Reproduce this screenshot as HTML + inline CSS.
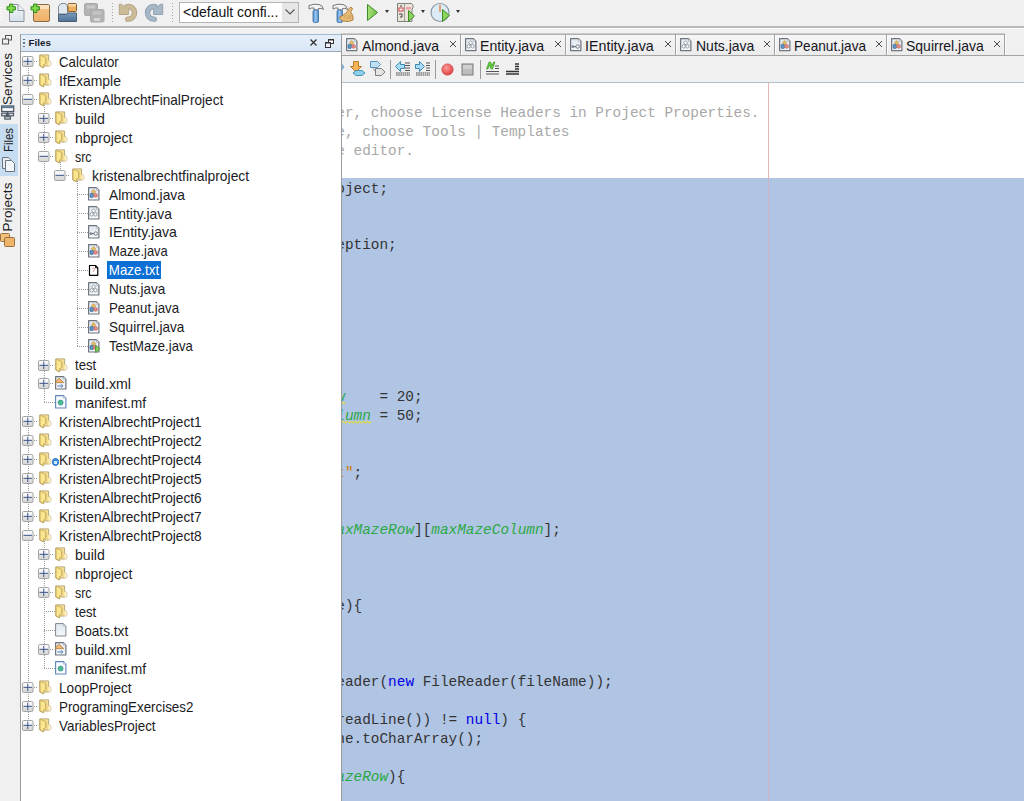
<!DOCTYPE html>
<html><head><meta charset="utf-8"><style>
*{box-sizing:border-box}
body{margin:0;width:1024px;height:801px;overflow:hidden;background:#f0f0f0;position:relative;font-family:"Liberation Sans",sans-serif}
.a{position:absolute}
.vl{position:absolute;width:1px;background:repeating-linear-gradient(to bottom,#9a9a9a 0 1px,transparent 1px 2px)}
.hl{position:absolute;height:1px;background:repeating-linear-gradient(to right,#9a9a9a 0 1px,transparent 1px 2px)}
.ex{position:absolute;width:12px;height:11px}
.ic{position:absolute;line-height:0}
.ic svg{display:block}
.tt{position:absolute;font-size:14.8px;line-height:19px;height:19px;color:#1b1b24;white-space:pre;transform:scaleX(0.93);transform-origin:0 0}
.sel{background:#0c6fd4;color:#fff;line-height:18px;height:18px;padding:0 2px;margin-left:-2px}
.cm{color:#a8a8a8} .kw{color:#0000e6} .fl{color:#2aa845;font-style:italic} .st{color:#ce7b00}
.code{position:absolute;font-family:"Liberation Mono",monospace;font-size:14.4px;line-height:19px;white-space:pre;color:#333}
.tab{position:absolute;top:34px;height:22px}
.tabt{position:absolute;font-size:13.5px;line-height:19px;color:#1b1b24;white-space:pre}
</style></head><body>
<!-- main toolbar -->
<div class="a" style="left:0;top:0;width:1024px;height:26px;background:#f0f0f0"></div>
<div class="a" style="left:0px;top:4px;width:2px;height:18px;background:repeating-linear-gradient(#fbfbfb 0 1px,transparent 1px 3px)"></div>
<div class="a" style="left:6px;top:3px;width:20px;height:20px;line-height:0"><svg width="20" height="20" viewBox="0 0 20 20"><defs><linearGradient id="nf" x1="0" y1="0" x2="0" y2="1"><stop offset="0" stop-color="#f4f7fb"/><stop offset="1" stop-color="#d6e0ea"/></linearGradient></defs><path d="M3.5 1.5h8.5l6 6v11h-14.5z" fill="url(#nf)" stroke="#8e949c"/><path d="M12 1.5v6h6" fill="#eef2f6" stroke="#8e949c"/><path d="M3.6 1.0999999999999996h3.2v2.6h2.6v3.2h-2.6v2.6h-3.2v-2.6h-2.6v-3.2h2.6z" fill="#7fdc4a" stroke="#2f8a1a" stroke-width="1"/></svg></div>
<div class="a" style="left:30px;top:3px;width:21px;height:20px;line-height:0"><svg width="21" height="20" viewBox="0 0 21 20"><defs><linearGradient id="np" x1="0" y1="0" x2="0" y2="1"><stop offset="0" stop-color="#f5c68a"/><stop offset="1" stop-color="#eeb068"/></linearGradient></defs><rect x="3.5" y="1.5" width="16" height="17" rx="1.5" fill="url(#np)" stroke="#8a6a45"/><rect x="4" y="2" width="15" height="4" fill="#fbe2bd"/><path d="M3.6 1.0999999999999996h3.2v2.6h2.6v3.2h-2.6v2.6h-3.2v-2.6h-2.6v-3.2h2.6z" fill="#7fdc4a" stroke="#2f8a1a" stroke-width="1"/></svg></div>
<div class="a" style="left:57px;top:2px;width:21px;height:21px;line-height:0"><svg width="21" height="21" viewBox="0 0 21 21"><defs><linearGradient id="op" x1="0" y1="0" x2="0" y2="1"><stop offset="0" stop-color="#7b9cc0"/><stop offset="1" stop-color="#4f6f93"/></linearGradient></defs><path d="M1.5 4.5l2.5-3h4.5l2 2.5v8h-9z" fill="#dfe7ef" stroke="#7e8a96"/><rect x="11" y="1.5" width="8.5" height="8" rx="1" fill="#eeb060" stroke="#8a6030"/><rect x="11.5" y="2" width="7.5" height="2.5" fill="#f8d8a8"/><path d="M1.5 12.5h8l1.5-1.5h8.5v8.5h-18z" fill="url(#op)" stroke="#4a5e74"/></svg></div>
<div class="a" style="left:84px;top:3px;width:21px;height:20px;line-height:0"><svg width="21" height="20" viewBox="0 0 21 20"><rect x="0.5" y="0.5" width="13" height="12" rx="1.5" fill="#b4b4b4" stroke="#a8a8a8"/><rect x="3" y="2.5" width="8" height="3" fill="#c8c8c8"/><rect x="6.5" y="6.5" width="13.5" height="12.5" rx="1.5" fill="#b4b4b4" stroke="#a8a8a8"/><rect x="9" y="8.5" width="8" height="3" fill="#c6c6c6"/><rect x="10" y="15" width="6" height="3" fill="#d6d6d6"/></svg></div>
<div class="a" style="left:112px;top:3px;width:1px;height:19px;background:repeating-linear-gradient(#a8a8a8 0 1px,transparent 1px 3px)"></div>
<div class="a" style="left:172px;top:3px;width:1px;height:19px;background:repeating-linear-gradient(#a8a8a8 0 1px,transparent 1px 3px)"></div>
<div class="a" style="left:118px;top:3px;width:20px;height:20px;line-height:0"><svg width="20" height="20" viewBox="0 0 20 20"><g stroke-linejoin="round"><path d="M9.2 3.6 A6.3 6.3 0 1 1 9.75 16.1" fill="none" stroke="#b0a080" stroke-width="5.4" stroke-linecap="round"/><path d="M1.3 1.2h1.9l3 2 4.2 2.8v5.5h-9.1z" fill="#cbbb99" stroke="#b0a080" stroke-width="0.9"/><path d="M9.2 3.6 A6.3 6.3 0 1 1 9.75 16.1" fill="none" stroke="#cbbb99" stroke-width="3.8" stroke-linecap="round"/><path d="M2 2h1l3 2 4 2.6v4.4h-8z" fill="#cbbb99"/></g></svg></div>
<div class="a" style="left:144px;top:3px;width:20px;height:20px;line-height:0"><svg width="20" height="20" viewBox="0 0 20 20"><g transform="translate(20,0) scale(-1,1)"><g stroke-linejoin="round"><path d="M9.2 3.6 A6.3 6.3 0 1 1 9.75 16.1" fill="none" stroke="#8c9eae" stroke-width="5.4" stroke-linecap="round"/><path d="M1.3 1.2h1.9l3 2 4.2 2.8v5.5h-9.1z" fill="#a6b7c6" stroke="#8c9eae" stroke-width="0.9"/><path d="M9.2 3.6 A6.3 6.3 0 1 1 9.75 16.1" fill="none" stroke="#a6b7c6" stroke-width="3.8" stroke-linecap="round"/><path d="M2 2h1l3 2 4 2.6v4.4h-8z" fill="#a6b7c6"/></g></g></svg></div>
<div class="a" style="left:179px;top:2px;width:120px;height:21px;border:1px solid #b4b4b4;background:#fff"></div>
<div class="a" style="left:282px;top:3px;width:16px;height:19px;background:#e6e6e6"></div>
<div class="a" style="left:284px;top:8px;width:12px;height:8px;line-height:0"><svg width="12" height="8" viewBox="0 0 12 8"><path d="M1.5 1.5l4.5 4.5 4.5-4.5" fill="none" stroke="#555" stroke-width="1.1"/></svg></div>
<div class="a" style="left:183px;top:3px;font-size:14px;line-height:19px;color:#111;white-space:pre">&lt;default confi...</div>
<div class="a" style="left:308px;top:3px;width:17px;height:20px;line-height:0"><svg width="17" height="20" viewBox="0 0 17 20"><defs><linearGradient id="hm" x1="0" y1="0" x2="1" y2="0"><stop offset="0" stop-color="#4f8ed0"/><stop offset="0.5" stop-color="#9cc8f0"/><stop offset="1" stop-color="#4a86c8"/></linearGradient></defs><path d="M1 2.5 Q6 0.5 11 1.5 Q15 2.5 15.5 6.5 Q13 4.5 10.5 5.5 V7 H6 V5 Q3.5 4.5 1 6z" fill="#f4f4f4" stroke="#6a6a6a" stroke-width="0.9"/><rect x="5" y="7" width="5.5" height="12.5" rx="1.5" fill="url(#hm)" stroke="#3a6a9a" stroke-width="0.8"/></svg></div>
<div class="a" style="left:332px;top:3px;width:17px;height:20px;line-height:0"><svg width="17" height="20" viewBox="0 0 17 20"><defs><linearGradient id="hm2" x1="0" y1="0" x2="1" y2="0"><stop offset="0" stop-color="#4f8ed0"/><stop offset="0.5" stop-color="#9cc8f0"/><stop offset="1" stop-color="#4a86c8"/></linearGradient></defs><path d="M1 2.5 Q6 0.5 11 1.5 Q15 2.5 15.5 6.5 Q13 4.5 10.5 5.5 V7 H6 V5 Q3.5 4.5 1 6z" fill="#f4f4f4" stroke="#6a6a6a" stroke-width="0.9"/><rect x="5" y="7" width="5.5" height="12.5" rx="1.5" fill="url(#hm2)" stroke="#3a6a9a" stroke-width="0.8"/></svg></div>
<div class="a" style="left:338px;top:6px;width:17px;height:17px;line-height:0"><svg width="17" height="17" viewBox="0 0 17 17"><path d="M12 1.5 Q14 0.5 14.5 3 L12.5 6 Q16 9 15 14 Q11 16.5 5 15 Q1.5 13.5 1.5 11 Q5 10 8.5 6.5z" fill="#e8bc78" stroke="#a87a3a" stroke-width="0.9"/><path d="M6 12l2-3M9 13l2-4M12 13l1-4" stroke="#c09050" stroke-width="0.8"/></svg></div>
<div class="a" style="left:366px;top:3px;width:13px;height:19px;line-height:0"><svg width="13" height="19" viewBox="0 0 13 19"><defs><linearGradient id="rg" x1="0" y1="0" x2="1" y2="0"><stop offset="0" stop-color="#a8e07a"/><stop offset="1" stop-color="#6cc046"/></linearGradient></defs><path d="M1.5 1.5l10 8-10 8z" fill="url(#rg)" stroke="#3d8a2a" stroke-linejoin="round"/></svg></div>
<div class="a" style="left:385px;top:10px;width:0;height:0;border-left:2.5px solid transparent;border-right:2.5px solid transparent;border-top:3px solid #333"></div>
<div class="a" style="left:396px;top:3px;width:21px;height:20px;line-height:0"><svg width="21" height="20" viewBox="0 0 21 20"><path d="M1.5 0.5h14l1.5 1.5v3l-1 1v12.5h-14.5z" fill="#e9e5d8" stroke="#808080"/><path d="M8.5 1v17" stroke="#a0a0a0"/><rect x="3" y="5" width="4" height="3" fill="#fff" stroke="#d04040"/><path d="M5 2v2M3 11h3v3H4" stroke="#444" fill="none"/><rect x="10" y="4" width="5" height="2.5" fill="#f3a0a8"/><path d="M12.5 7.5l6 5.5-6 5.5z" fill="#8cd65c" stroke="#3d8a2a" stroke-linejoin="round"/></svg></div>
<div class="a" style="left:421px;top:10px;width:0;height:0;border-left:2.5px solid transparent;border-right:2.5px solid transparent;border-top:3px solid #333"></div>
<div class="a" style="left:430px;top:2px;width:21px;height:21px;line-height:0"><svg width="21" height="21" viewBox="0 0 21 21"><circle cx="10" cy="10.5" r="9" fill="#dceaf6" stroke="#8a97a4" stroke-width="1.2"/><path d="M10 3v7" stroke="#e07a30" stroke-width="1.3"/><path d="M12.5 7.5l7 6-7 6z" fill="#8cd65c" stroke="#3d8a2a" stroke-linejoin="round"/></svg></div>
<div class="a" style="left:456px;top:10px;width:0;height:0;border-left:2.5px solid transparent;border-right:2.5px solid transparent;border-top:3px solid #333"></div>
<div class="a" style="left:0;top:26px;width:1024px;height:2px;background:#b9b9b9"></div>
<div class="a" style="left:0;top:28px;width:1024px;height:1px;background:#fbfbfb"></div>

<!-- editor -->
<div class="a" style="left:341px;top:55px;width:683px;height:1px;background:#a3a3a3"></div>
<div class="a" style="left:341px;top:33px;width:120px;height:1px;background:#cdcdcd"></div>
<div class="a" style="left:341px;top:34px;width:119px;height:21px;background:linear-gradient(#f6f6f6,#ebebeb);border-top:1px solid #b0b0b0"></div>
<div class="a" style="left:460px;top:33px;width:106px;height:1px;background:#cdcdcd"></div>
<div class="a" style="left:460px;top:34px;width:105px;height:21px;background:linear-gradient(#f6f6f6,#ebebeb);border-top:1px solid #b0b0b0"></div>
<div class="a" style="left:565px;top:33px;width:111px;height:1px;background:#cdcdcd"></div>
<div class="a" style="left:565px;top:34px;width:110px;height:21px;background:linear-gradient(#f6f6f6,#ebebeb);border-top:1px solid #b0b0b0"></div>
<div class="a" style="left:675px;top:33px;width:100px;height:1px;background:#cdcdcd"></div>
<div class="a" style="left:675px;top:34px;width:99px;height:21px;background:linear-gradient(#f6f6f6,#ebebeb);border-top:1px solid #b0b0b0"></div>
<div class="a" style="left:774px;top:33px;width:113px;height:1px;background:#cdcdcd"></div>
<div class="a" style="left:774px;top:34px;width:112px;height:21px;background:linear-gradient(#f6f6f6,#ebebeb);border-top:1px solid #b0b0b0"></div>
<div class="a" style="left:886px;top:33px;width:119px;height:1px;background:#cdcdcd"></div>
<div class="a" style="left:886px;top:34px;width:118px;height:21px;background:linear-gradient(#f6f6f6,#ebebeb);border-top:1px solid #b0b0b0"></div>
<div class="a" style="left:460px;top:34px;width:1px;height:21px;background:#a0a0a0"></div>
<div class="a" style="left:461px;top:35px;width:1px;height:20px;background:#fdfdfd"></div>
<div class="a" style="left:345.5px;top:38px;line-height:0"><svg width="12" height="14" viewBox="0 0 12 14"><defs><linearGradient id="dg2" x1="0" y1="0" x2="0" y2="1"><stop offset="0" stop-color="#dfe7f0"/><stop offset="1" stop-color="#f6f8fb"/></linearGradient></defs><path d="M0.6 0.6H8.4L10.9 3.1V12.6H0.6z" fill="url(#dg2)" stroke="#6f757d" stroke-width="1.2" stroke-linejoin="round"/><path d="M8.4 0.9V3.1H10.6" fill="#fff" stroke="#9aa0a8" stroke-width="0.7"/><path d="M5.6 2.6l2.2 2.2-2.2 2.2-2.2-2.2z" fill="#e9bd62" stroke="#b08a3a" stroke-width="0.6"/><rect x="2" y="6.3" width="3.4" height="4.3" rx="1.2" fill="#5d95c2" stroke="#2f5f8a" stroke-width="0.6"/><circle cx="7.6" cy="8.4" r="1.9" fill="#ec8c86" stroke="#b25a55" stroke-width="0.6"/></svg></div>
<div class="a" style="left:362px;top:36.5px;font-size:14.2px;line-height:19px;color:#16161e;white-space:pre;transform:scaleX(0.9860);transform-origin:0 0">Almond.java</div>
<div class="a" style="left:449px;top:40px;width:8px;height:8px;line-height:0"><svg width="8" height="8" viewBox="0 0 8 8"><path d="M1 1l6 6M7 1l-6 6" stroke="#4a4a4a" stroke-width="1"/></svg></div>
<div class="a" style="left:565px;top:34px;width:1px;height:21px;background:#a0a0a0"></div>
<div class="a" style="left:566px;top:35px;width:1px;height:20px;background:#fdfdfd"></div>
<div class="a" style="left:464.5px;top:38px;line-height:0"><svg width="12" height="14" viewBox="0 0 12 14"><defs><linearGradient id="dg2" x1="0" y1="0" x2="0" y2="1"><stop offset="0" stop-color="#dfe7f0"/><stop offset="1" stop-color="#f6f8fb"/></linearGradient></defs><path d="M0.6 0.6H8.4L10.9 3.1V12.6H0.6z" fill="url(#dg2)" stroke="#6f757d" stroke-width="1.2" stroke-linejoin="round"/><path d="M8.4 0.9V3.1H10.6" fill="#fff" stroke="#9aa0a8" stroke-width="0.7"/><path d="M5.6 2.8l2 2-2 2-2-2z" fill="#fff" stroke="#7d848c" stroke-width="0.8"/><circle cx="3.7" cy="8.3" r="1.7" fill="#fff" stroke="#7d848c" stroke-width="0.8"/><circle cx="7.5" cy="8.3" r="1.7" fill="#fff" stroke="#7d848c" stroke-width="0.8"/></svg></div>
<div class="a" style="left:480.2px;top:36.5px;font-size:14.2px;line-height:19px;color:#16161e;white-space:pre;transform:scaleX(0.9959);transform-origin:0 0">Entity.java</div>
<div class="a" style="left:554px;top:40px;width:8px;height:8px;line-height:0"><svg width="8" height="8" viewBox="0 0 8 8"><path d="M1 1l6 6M7 1l-6 6" stroke="#4a4a4a" stroke-width="1"/></svg></div>
<div class="a" style="left:675px;top:34px;width:1px;height:21px;background:#a0a0a0"></div>
<div class="a" style="left:676px;top:35px;width:1px;height:20px;background:#fdfdfd"></div>
<div class="a" style="left:569.5px;top:38px;line-height:0"><svg width="12" height="14" viewBox="0 0 12 14"><defs><linearGradient id="dg2" x1="0" y1="0" x2="0" y2="1"><stop offset="0" stop-color="#dfe7f0"/><stop offset="1" stop-color="#f6f8fb"/></linearGradient></defs><path d="M0.6 0.6H8.4L10.9 3.1V12.6H0.6z" fill="url(#dg2)" stroke="#6f757d" stroke-width="1.2" stroke-linejoin="round"/><path d="M8.4 0.9V3.1H10.6" fill="#fff" stroke="#9aa0a8" stroke-width="0.7"/><path d="M2 8.6h4" stroke="#666c74" stroke-width="1.2"/><circle cx="7.7" cy="8.6" r="1.7" fill="#fff" stroke="#666c74" stroke-width="0.9"/><rect x="1.6" y="7.4" width="2.2" height="2.4" fill="#7a8088"/></svg></div>
<div class="a" style="left:585.2px;top:36.5px;font-size:14.2px;line-height:19px;color:#16161e;white-space:pre;transform:scaleX(1.0057);transform-origin:0 0">IEntity.java</div>
<div class="a" style="left:664px;top:40px;width:8px;height:8px;line-height:0"><svg width="8" height="8" viewBox="0 0 8 8"><path d="M1 1l6 6M7 1l-6 6" stroke="#4a4a4a" stroke-width="1"/></svg></div>
<div class="a" style="left:774px;top:34px;width:1px;height:21px;background:#a0a0a0"></div>
<div class="a" style="left:775px;top:35px;width:1px;height:20px;background:#fdfdfd"></div>
<div class="a" style="left:679.5px;top:38px;line-height:0"><svg width="12" height="14" viewBox="0 0 12 14"><defs><linearGradient id="dg2" x1="0" y1="0" x2="0" y2="1"><stop offset="0" stop-color="#dfe7f0"/><stop offset="1" stop-color="#f6f8fb"/></linearGradient></defs><path d="M0.6 0.6H8.4L10.9 3.1V12.6H0.6z" fill="url(#dg2)" stroke="#6f757d" stroke-width="1.2" stroke-linejoin="round"/><path d="M8.4 0.9V3.1H10.6" fill="#fff" stroke="#9aa0a8" stroke-width="0.7"/><path d="M5.6 2.8l2 2-2 2-2-2z" fill="#fff" stroke="#7d848c" stroke-width="0.8"/><circle cx="3.7" cy="8.3" r="1.7" fill="#fff" stroke="#7d848c" stroke-width="0.8"/><circle cx="7.5" cy="8.3" r="1.7" fill="#fff" stroke="#7d848c" stroke-width="0.8"/></svg></div>
<div class="a" style="left:696px;top:36.5px;font-size:14.2px;line-height:19px;color:#16161e;white-space:pre;transform:scaleX(0.9860);transform-origin:0 0">Nuts.java</div>
<div class="a" style="left:763px;top:40px;width:8px;height:8px;line-height:0"><svg width="8" height="8" viewBox="0 0 8 8"><path d="M1 1l6 6M7 1l-6 6" stroke="#4a4a4a" stroke-width="1"/></svg></div>
<div class="a" style="left:886px;top:34px;width:1px;height:21px;background:#a0a0a0"></div>
<div class="a" style="left:887px;top:35px;width:1px;height:20px;background:#fdfdfd"></div>
<div class="a" style="left:778.5px;top:38px;line-height:0"><svg width="12" height="14" viewBox="0 0 12 14"><defs><linearGradient id="dg2" x1="0" y1="0" x2="0" y2="1"><stop offset="0" stop-color="#dfe7f0"/><stop offset="1" stop-color="#f6f8fb"/></linearGradient></defs><path d="M0.6 0.6H8.4L10.9 3.1V12.6H0.6z" fill="url(#dg2)" stroke="#6f757d" stroke-width="1.2" stroke-linejoin="round"/><path d="M8.4 0.9V3.1H10.6" fill="#fff" stroke="#9aa0a8" stroke-width="0.7"/><path d="M5.6 2.6l2.2 2.2-2.2 2.2-2.2-2.2z" fill="#e9bd62" stroke="#b08a3a" stroke-width="0.6"/><rect x="2" y="6.3" width="3.4" height="4.3" rx="1.2" fill="#5d95c2" stroke="#2f5f8a" stroke-width="0.6"/><circle cx="7.6" cy="8.4" r="1.9" fill="#ec8c86" stroke="#b25a55" stroke-width="0.6"/></svg></div>
<div class="a" style="left:793.5px;top:36.5px;font-size:14.2px;line-height:19px;color:#16161e;white-space:pre;transform:scaleX(0.9613);transform-origin:0 0">Peanut.java</div>
<div class="a" style="left:875px;top:40px;width:8px;height:8px;line-height:0"><svg width="8" height="8" viewBox="0 0 8 8"><path d="M1 1l6 6M7 1l-6 6" stroke="#4a4a4a" stroke-width="1"/></svg></div>
<div class="a" style="left:1004px;top:34px;width:1px;height:21px;background:#a0a0a0"></div>
<div class="a" style="left:1005px;top:35px;width:1px;height:20px;background:#fdfdfd"></div>
<div class="a" style="left:890.5px;top:38px;line-height:0"><svg width="12" height="14" viewBox="0 0 12 14"><defs><linearGradient id="dg2" x1="0" y1="0" x2="0" y2="1"><stop offset="0" stop-color="#dfe7f0"/><stop offset="1" stop-color="#f6f8fb"/></linearGradient></defs><path d="M0.6 0.6H8.4L10.9 3.1V12.6H0.6z" fill="url(#dg2)" stroke="#6f757d" stroke-width="1.2" stroke-linejoin="round"/><path d="M8.4 0.9V3.1H10.6" fill="#fff" stroke="#9aa0a8" stroke-width="0.7"/><path d="M5.6 2.6l2.2 2.2-2.2 2.2-2.2-2.2z" fill="#e9bd62" stroke="#b08a3a" stroke-width="0.6"/><rect x="2" y="6.3" width="3.4" height="4.3" rx="1.2" fill="#5d95c2" stroke="#2f5f8a" stroke-width="0.6"/><circle cx="7.6" cy="8.4" r="1.9" fill="#ec8c86" stroke="#b25a55" stroke-width="0.6"/></svg></div>
<div class="a" style="left:906px;top:36.5px;font-size:14.2px;line-height:19px;color:#16161e;white-space:pre;transform:scaleX(0.9860);transform-origin:0 0">Squirrel.java</div>
<div class="a" style="left:993px;top:40px;width:8px;height:8px;line-height:0"><svg width="8" height="8" viewBox="0 0 8 8"><path d="M1 1l6 6M7 1l-6 6" stroke="#4a4a4a" stroke-width="1"/></svg></div>
<div class="a" style="left:341px;top:56px;width:683px;height:26px;background:#f0f0f0"></div>
<div class="a" style="left:341px;top:82px;width:683px;height:1px;background:#b1c0cf"></div>
<div class="a" style="left:341px;top:62px;width:4px;height:10px;line-height:0"><svg width="4" height="10" viewBox="0 0 4 10"><path d="M0 1l3 4-3 4z" fill="#7ec0e8" stroke="#3d88b8" stroke-width="0.6"/></svg></div>
<div class="a" style="left:350px;top:61px;width:16px;height:15px;line-height:0"><svg width="16" height="15" viewBox="0 0 16 15"><path d="M3.5 0.5h5v5h3l-5.5 5.5-5.5-5.5h3z" fill="#f5b456" stroke="#b07020" stroke-width="0.9"/><path d="M6 9.5h6l3 2.5-3 2.5h-6l-3-2.5z" fill="#8cd0ec" stroke="#3c8ab0" stroke-width="0.9"/></svg></div>
<div class="a" style="left:370px;top:61px;width:16px;height:15px;line-height:0"><svg width="16" height="15" viewBox="0 0 16 15"><path d="M0.5 0.5h7l3 3-3 3h-7z" fill="#bfe0f4" stroke="#4a8ab8" stroke-width="0.9"/><path d="M5.5 7.5h6l3.5 3.5-3.5 3.5h-6z" fill="#e4e4e4" stroke="#707070" stroke-width="0.9"/><path d="M3 7l2 3" stroke="#888" stroke-width="0.8"/></svg></div>
<div class="a" style="left:390px;top:60px;width:1px;height:19px;background:#9a9a9a"></div>
<div class="a" style="left:395px;top:61px;width:16px;height:15px;line-height:0"><svg width="16" height="15" viewBox="0 0 16 15"><path d="M0.5 5.5l5-5v3h4v4h-4v3z" fill="#a8dcf4" stroke="#2f7fb0" stroke-width="0.9"/><path d="M10 2h5M10 4.5h5M10 7h5M10 9.5h5" stroke="#555" stroke-width="1"/><path d="M1 12h14M1 14h14" stroke="#444" stroke-width="1.2" stroke-dasharray="1.6 0.6"/></svg></div>
<div class="a" style="left:415px;top:61px;width:16px;height:15px;line-height:0"><svg width="16" height="15" viewBox="0 0 16 15"><path d="M9.5 5.5l-5-5v3h-4v4h4v3z" fill="#a8dcf4" stroke="#2f7fb0" stroke-width="0.9"/><path d="M11 2h4M11 4.5h4M11 7h4M11 9.5h4" stroke="#555" stroke-width="1"/><path d="M1 12h14M1 14h14" stroke="#444" stroke-width="1.2" stroke-dasharray="1.6 0.6"/></svg></div>
<div class="a" style="left:435px;top:60px;width:1px;height:19px;background:#9a9a9a"></div>
<div class="a" style="left:441px;top:63px;width:13px;height:13px;line-height:0"><svg width="13" height="13" viewBox="0 0 13 13"><defs><radialGradient id="rc" cx="0.4" cy="0.35" r="0.7"><stop offset="0" stop-color="#ff9a9a"/><stop offset="1" stop-color="#e03c3c"/></radialGradient></defs><circle cx="6.5" cy="6.5" r="5.6" fill="url(#rc)" stroke="#c84848" stroke-width="0.8"/></svg></div>
<div class="a" style="left:461px;top:63px;width:13px;height:13px;line-height:0"><svg width="13" height="13" viewBox="0 0 13 13"><rect x="1" y="1" width="11" height="11" fill="#bdbdbd" stroke="#7a7a7a" stroke-width="1"/><rect x="2" y="2" width="9" height="4" fill="#d0d0d0"/></svg></div>
<div class="a" style="left:480px;top:60px;width:1px;height:19px;background:#9a9a9a"></div>
<div class="a" style="left:485px;top:61px;width:15px;height:15px;line-height:0"><svg width="15" height="15" viewBox="0 0 15 15"><path d="M1.5 8l2.5-7h1.5l1.5 4 1.5-4h1.5l-2.5 7h-1.5l-1.5-4-1.5 4z" fill="#6ad040" stroke="#2d8a1e" stroke-width="0.6"/><path d="M10 5h4M10 7.5h4M1 10.5h13M1 13h13" stroke="#555" stroke-width="1.2"/></svg></div>
<div class="a" style="left:505px;top:61px;width:15px;height:15px;line-height:0"><svg width="15" height="15" viewBox="0 0 15 15"><path d="M10 3h4M10 5.5h4M10 8h4M1 10.5h13M1 13h13" stroke="#333" stroke-width="1.3"/></svg></div>
<div class="a" style="left:341px;top:83px;width:683px;height:95px;background:#fff"></div>
<div class="a" style="left:341px;top:178px;width:683px;height:623px;background:#b0c5e3"></div>
<div class="a" style="left:768px;top:83px;width:1px;height:95px;background:#e8b4b4"></div>
<div class="a" style="left:768px;top:178px;width:1px;height:623px;background:#d2b2c6"></div>
<div class="code" style="left:77.2px;top:103.67px"><span class="cm"> * To change this license header, choose License Headers in Project Properties.</span></div>
<div class="code" style="left:77.2px;top:122.64px"><span class="cm"> * To change this template file, choose Tools | Templates</span></div>
<div class="code" style="left:77.2px;top:141.61px"><span class="cm"> * and open the template in the editor.</span></div>
<div class="code" style="left:77.2px;top:179.55px">package kristenalbrechtfinalproject;</div>
<div class="code" style="left:77.2px;top:236.46px">import java.io.FileNotFoundException;</div>
<div class="code" style="left:77.2px;top:388.22px">    static final int <span class="fl">maxMazeRow</span>    = 20;</div>
<div class="code" style="left:77.2px;top:407.19px">    static final int <span class="fl">maxMazeColumn</span> = 50;</div>
<div class="code" style="left:77.2px;top:464.1px">    String fileName = <span class="st">"Maze.txt"</span>;</div>
<div class="code" style="left:77.2px;top:521.01px">    char[][] maze = <span class="kw">new</span> char[<span class="fl">maxMazeRow</span>][<span class="fl">maxMazeColumn</span>];</div>
<div class="code" style="left:77.2px;top:596.89px">    public Maze(String fileName){</div>
<div class="code" style="left:77.2px;top:672.77px">            br = <span class="kw">new</span> BufferedReader(<span class="kw">new</span> FileReader(fileName));</div>
<div class="code" style="left:77.2px;top:710.71px">            while ((line = br.readLine()) != <span class="kw">null</span>) {</div>
<div class="code" style="left:77.2px;top:729.68px">                char[] ch = line.toCharArray();</div>
<div class="code" style="left:77.2px;top:767.62px">                while(i &lt; <span class="fl">maxMazeRow</span>){</div>
<div class="a" style="left:0;top:0;width:0;height:0"><svg style="position:absolute;left:0;top:0;overflow:visible" width="1" height="1"><polyline points="259.375,402.5 261.375,404.0 263.375,402.5 265.375,404.0 267.375,402.5 269.375,404.0 271.375,402.5 273.375,404.0 275.375,402.5 277.375,404.0 279.375,402.5 281.375,404.0 283.375,402.5 285.375,404.0 287.375,402.5 289.375,404.0 291.375,402.5 293.375,404.0 295.375,402.5 297.375,404.0 299.375,402.5 301.375,404.0 303.375,402.5 305.375,404.0 307.375,402.5 309.375,404.0 311.375,402.5 313.375,404.0 315.375,402.5 317.375,404.0 319.375,402.5 321.375,404.0 323.375,402.5 325.375,404.0 327.375,402.5 329.375,404.0 331.375,402.5 333.375,404.0 335.375,402.5 337.375,404.0 339.375,402.5 341.375,404.0 343.375,402.5 345.375,404.0" fill="none" stroke="#dcd84a" stroke-width="1.1"/></svg></div>
<div class="a" style="left:0;top:0;width:0;height:0"><svg style="position:absolute;left:0;top:0;overflow:visible" width="1" height="1"><polyline points="259.375,421.5 261.375,423.0 263.375,421.5 265.375,423.0 267.375,421.5 269.375,423.0 271.375,421.5 273.375,423.0 275.375,421.5 277.375,423.0 279.375,421.5 281.375,423.0 283.375,421.5 285.375,423.0 287.375,421.5 289.375,423.0 291.375,421.5 293.375,423.0 295.375,421.5 297.375,423.0 299.375,421.5 301.375,423.0 303.375,421.5 305.375,423.0 307.375,421.5 309.375,423.0 311.375,421.5 313.375,423.0 315.375,421.5 317.375,423.0 319.375,421.5 321.375,423.0 323.375,421.5 325.375,423.0 327.375,421.5 329.375,423.0 331.375,421.5 333.375,423.0 335.375,421.5 337.375,423.0 339.375,421.5 341.375,423.0 343.375,421.5 345.375,423.0 347.375,421.5 349.375,423.0 351.375,421.5 353.375,423.0 355.375,421.5 357.375,423.0 359.375,421.5 361.375,423.0 363.375,421.5 365.375,423.0 367.375,421.5 369.375,423.0 371.375,421.5" fill="none" stroke="#dcd84a" stroke-width="1.1"/></svg></div>

<!-- sidebar -->
<div class="a" style="left:0;top:29px;width:20px;height:772px;background:#f0f0f0"></div>
<div class="a" style="left:2px;top:35px;width:10px;height:10px;line-height:0"><svg width="10" height="10" viewBox="0 0 10 10"><rect x="3.5" y="0.5" width="6" height="4.5" fill="none" stroke="#555"/><rect x="0.5" y="4" width="6" height="5" fill="#f0f0f0" stroke="#555"/></svg></div>
<div class="a" style="left:8px;top:78.5px;width:0;height:0"><div style="position:absolute;left:0;top:0;transform:translate(-50%,-50%) rotate(-90deg) scaleX(1);font-size:13.5px;line-height:16px;color:#1b1b24;white-space:pre">Services</div></div>
<div class="a" style="left:1px;top:105px;width:14px;height:15px;line-height:0"><svg width="14" height="15" viewBox="0 0 14 15"><rect x="0.7" y="1" width="12" height="5.5" fill="#fff" stroke="#4f5a66" stroke-width="1.3"/><rect x="1" y="1.2" width="11.5" height="2" fill="#5d7a98"/><rect x="0.7" y="8.2" width="4.8" height="2.6" fill="#dfe4ea" stroke="#4f5a66" stroke-width="1.2"/><rect x="7.7" y="8.2" width="4.8" height="2.6" fill="#dfe4ea" stroke="#4f5a66" stroke-width="1.2"/><path d="M6.6 6.5v5" stroke="#4f5a66" stroke-width="1.2"/><rect x="3.8" y="11.7" width="5.6" height="2.4" fill="#dfe4ea" stroke="#4f5a66" stroke-width="1.2"/></svg></div>
<div class="a" style="left:0;top:124px;width:18px;height:52px;background:#c6dcf0"></div>
<div class="a" style="left:8.5px;top:139.5px;width:0;height:0"><div style="position:absolute;left:0;top:0;transform:translate(-50%,-50%) rotate(-90deg) scaleX(0.84);font-size:13.5px;line-height:16px;color:#1b1b24;white-space:pre">Files</div></div>
<div class="a" style="left:2px;top:157px;width:13px;height:15px;line-height:0"><svg width="13" height="15" viewBox="0 0 13 15"><path d="M0.5 0.5h6l2 2v9h-8z" fill="#e8eef4" stroke="#6a7480"/><path d="M3.5 3.5h6l3 3v8h-9z" fill="#f4f7fa" stroke="#6a7480"/></svg></div>
<div class="a" style="left:8px;top:206.5px;width:0;height:0"><div style="position:absolute;left:0;top:0;transform:translate(-50%,-50%) rotate(-90deg) scaleX(1);font-size:13.5px;line-height:16px;color:#1b1b24;white-space:pre">Projects</div></div>
<div class="a" style="left:0px;top:233px;width:15px;height:14px;line-height:0"><svg width="15" height="14" viewBox="0 0 15 14"><rect x="0.5" y="0.5" width="9" height="8" rx="1" fill="#f2c07a" stroke="#9a7040"/><rect x="4.5" y="4.5" width="10" height="9" rx="1" fill="#eeb468" stroke="#9a7040"/></svg></div>
<div class="a" style="left:20px;top:34px;width:1px;height:767px;background:#9b9b9b"></div>

<!-- files panel -->
<div class="a" style="left:21px;top:34px;width:320px;height:17px;background:linear-gradient(#e6eff9,#d9e7f6);border-top:1px solid #9fbad3"></div>
<div class="a" style="left:21px;top:51px;width:320px;height:1px;background:#97a9bb"></div>
<div class="a" style="left:21px;top:52px;width:320px;height:749px;background:#fff"></div>
<div class="a" style="left:341px;top:34px;width:1px;height:767px;background:#9b9b9b"></div>
<div class="a" style="left:28.5px;top:37px;font-weight:bold;font-size:9.8px;line-height:11px;color:#1a1a2a;transform:scaleX(1);transform-origin:0 0">Files</div>
<div class="a" style="left:23.2px;top:38.7px;width:1.6px;height:1.6px;background:#56606c;border-radius:0.8px"></div>
<div class="a" style="left:23.2px;top:42.2px;width:1.6px;height:1.6px;background:#56606c;border-radius:0.8px"></div>
<div class="a" style="left:23.2px;top:45.7px;width:1.6px;height:1.6px;background:#56606c;border-radius:0.8px"></div>
<div class="a" style="left:309px;top:38px;width:10px;height:9px;line-height:0"><svg width="10" height="9" viewBox="0 0 10 9"><path d="M1.5 1.5l6 6M7.5 1.5l-6 6" stroke="#333" stroke-width="1.3"/></svg></div>
<div class="a" style="left:324px;top:38px;width:11px;height:11px;line-height:0"><svg width="11" height="11" viewBox="0 0 11 11"><rect x="4.5" y="1.5" width="5" height="4" fill="#fff" stroke="#333"/><rect x="4" y="1" width="6" height="1.5" fill="#333"/><rect x="1.5" y="4.5" width="5" height="5" fill="#eef" stroke="#333"/><rect x="1" y="4" width="6" height="1.5" fill="#333"/></svg></div>
<div class="vl" style="left:28px;top:56px;height:668.9499999999999px"></div>
<div class="vl" style="left:44px;top:104.94px;height:297.52px"></div>
<div class="vl" style="left:60px;top:161.85px;height:7.969999999999999px"></div>
<div class="vl" style="left:77px;top:180.82px;height:164.72999999999996px"></div>
<div class="vl" style="left:44px;top:541.25px;height:126.78999999999996px"></div>
<div class="hl" style="left:34px;top:61.0px;width:3px"></div>
<div class="ex" style="left:22.2px;top:56.0px"><svg width="12" height="11" viewBox="0 0 12 11" style="position:absolute;left:0;top:0"><defs><linearGradient id="eg" x1="0" y1="0" x2="0" y2="1"><stop offset="0" stop-color="#fbfbfb"/><stop offset="0.45" stop-color="#f2f2f2"/><stop offset="0.55" stop-color="#e2e2e2"/><stop offset="1" stop-color="#d6d6d6"/></linearGradient></defs><rect x="0.5" y="0.5" width="10.5" height="10" rx="1.2" fill="url(#eg)" stroke="#a3a3a3"/><g><path d="M1.5 5.35h8.5" stroke="#3d5689" stroke-width="1.0"/><path d="M5.75 1.7v7.4" stroke="#3d5689" stroke-width="1.0"/></g></svg></div>
<div class="ic" style="left:39px;top:54.0px"><svg width="13" height="15" viewBox="0 0 13 15"><path d="M0.7 0.9H9.6V6.4Q11.8 6.9 11.8 8.6V11Q11.6 12 9.6 12H4.6V13.9L0.7 12z" fill="#f5df96" stroke="#b5a16c" stroke-width="0.9" stroke-linejoin="round"/><path d="M9.6 6.4Q11.8 6.9 11.8 8.6V11Q11.6 12 9.6 12" fill="#fbf0c8" stroke="none"/><path d="M1.1 1.3L6.6 3.4V10L4.6 10.8V13.6L1.1 11.8z" fill="#f9e68e" stroke="#c2a458" stroke-width="0.8" stroke-linejoin="round"/><path d="M7.2 3.8V10.2" stroke="#d9bc6a" stroke-width="0.9"/></svg></div>
<div class="tt" style="left:58.8px;top:52.75px;transform:scaleX(0.8967)">Calculator</div>
<div class="hl" style="left:34px;top:79.97px;width:3px"></div>
<div class="ex" style="left:22.2px;top:74.97px"><svg width="12" height="11" viewBox="0 0 12 11" style="position:absolute;left:0;top:0"><defs><linearGradient id="eg" x1="0" y1="0" x2="0" y2="1"><stop offset="0" stop-color="#fbfbfb"/><stop offset="0.45" stop-color="#f2f2f2"/><stop offset="0.55" stop-color="#e2e2e2"/><stop offset="1" stop-color="#d6d6d6"/></linearGradient></defs><rect x="0.5" y="0.5" width="10.5" height="10" rx="1.2" fill="url(#eg)" stroke="#a3a3a3"/><g><path d="M1.5 5.35h8.5" stroke="#3d5689" stroke-width="1.0"/><path d="M5.75 1.7v7.4" stroke="#3d5689" stroke-width="1.0"/></g></svg></div>
<div class="ic" style="left:39px;top:72.97px"><svg width="13" height="15" viewBox="0 0 13 15"><path d="M0.7 0.9H9.6V6.4Q11.8 6.9 11.8 8.6V11Q11.6 12 9.6 12H4.6V13.9L0.7 12z" fill="#f5df96" stroke="#b5a16c" stroke-width="0.9" stroke-linejoin="round"/><path d="M9.6 6.4Q11.8 6.9 11.8 8.6V11Q11.6 12 9.6 12" fill="#fbf0c8" stroke="none"/><path d="M1.1 1.3L6.6 3.4V10L4.6 10.8V13.6L1.1 11.8z" fill="#f9e68e" stroke="#c2a458" stroke-width="0.8" stroke-linejoin="round"/><path d="M7.2 3.8V10.2" stroke="#d9bc6a" stroke-width="0.9"/></svg></div>
<div class="tt" style="left:58.8px;top:71.72px;transform:scaleX(0.9417)">IfExample</div>
<div class="hl" style="left:34px;top:98.94px;width:3px"></div>
<div class="ex" style="left:22.2px;top:93.94px"><svg width="12" height="11" viewBox="0 0 12 11" style="position:absolute;left:0;top:0"><defs><linearGradient id="eg" x1="0" y1="0" x2="0" y2="1"><stop offset="0" stop-color="#fbfbfb"/><stop offset="0.45" stop-color="#f2f2f2"/><stop offset="0.55" stop-color="#e2e2e2"/><stop offset="1" stop-color="#d6d6d6"/></linearGradient></defs><rect x="0.5" y="0.5" width="10.5" height="10" rx="1.2" fill="url(#eg)" stroke="#a3a3a3"/><g><path d="M1.5 5.35h8.5" stroke="#3d5689" stroke-width="1.0"/></g></svg></div>
<div class="ic" style="left:39px;top:91.94px"><svg width="13" height="15" viewBox="0 0 13 15"><path d="M0.7 0.9H9.6V6.4Q11.8 6.9 11.8 8.6V11Q11.6 12 9.6 12H4.6V13.9L0.7 12z" fill="#f5df96" stroke="#b5a16c" stroke-width="0.9" stroke-linejoin="round"/><path d="M9.6 6.4Q11.8 6.9 11.8 8.6V11Q11.6 12 9.6 12" fill="#fbf0c8" stroke="none"/><path d="M1.1 1.3L6.6 3.4V10L4.6 10.8V13.6L1.1 11.8z" fill="#f9e68e" stroke="#c2a458" stroke-width="0.8" stroke-linejoin="round"/><path d="M7.2 3.8V10.2" stroke="#d9bc6a" stroke-width="0.9"/></svg></div>
<div class="tt" style="left:58.8px;top:90.69px;transform:scaleX(0.9202)">KristenAlbrechtFinalProject</div>
<div class="hl" style="left:50px;top:117.91px;width:3px"></div>
<div class="ex" style="left:38.2px;top:112.91px"><svg width="12" height="11" viewBox="0 0 12 11" style="position:absolute;left:0;top:0"><defs><linearGradient id="eg" x1="0" y1="0" x2="0" y2="1"><stop offset="0" stop-color="#fbfbfb"/><stop offset="0.45" stop-color="#f2f2f2"/><stop offset="0.55" stop-color="#e2e2e2"/><stop offset="1" stop-color="#d6d6d6"/></linearGradient></defs><rect x="0.5" y="0.5" width="10.5" height="10" rx="1.2" fill="url(#eg)" stroke="#a3a3a3"/><g><path d="M1.5 5.35h8.5" stroke="#3d5689" stroke-width="1.0"/><path d="M5.75 1.7v7.4" stroke="#3d5689" stroke-width="1.0"/></g></svg></div>
<div class="ic" style="left:55px;top:110.91px"><svg width="13" height="15" viewBox="0 0 13 15"><path d="M0.7 0.9H9.6V6.4Q11.8 6.9 11.8 8.6V11Q11.6 12 9.6 12H4.6V13.9L0.7 12z" fill="#f5df96" stroke="#b5a16c" stroke-width="0.9" stroke-linejoin="round"/><path d="M9.6 6.4Q11.8 6.9 11.8 8.6V11Q11.6 12 9.6 12" fill="#fbf0c8" stroke="none"/><path d="M1.1 1.3L6.6 3.4V10L4.6 10.8V13.6L1.1 11.8z" fill="#f9e68e" stroke="#c2a458" stroke-width="0.8" stroke-linejoin="round"/><path d="M7.2 3.8V10.2" stroke="#d9bc6a" stroke-width="0.9"/></svg></div>
<div class="tt" style="left:75.4px;top:109.66px;transform:scaleX(0.9506)">build</div>
<div class="hl" style="left:50px;top:136.88px;width:3px"></div>
<div class="ex" style="left:38.2px;top:131.88px"><svg width="12" height="11" viewBox="0 0 12 11" style="position:absolute;left:0;top:0"><defs><linearGradient id="eg" x1="0" y1="0" x2="0" y2="1"><stop offset="0" stop-color="#fbfbfb"/><stop offset="0.45" stop-color="#f2f2f2"/><stop offset="0.55" stop-color="#e2e2e2"/><stop offset="1" stop-color="#d6d6d6"/></linearGradient></defs><rect x="0.5" y="0.5" width="10.5" height="10" rx="1.2" fill="url(#eg)" stroke="#a3a3a3"/><g><path d="M1.5 5.35h8.5" stroke="#3d5689" stroke-width="1.0"/><path d="M5.75 1.7v7.4" stroke="#3d5689" stroke-width="1.0"/></g></svg></div>
<div class="ic" style="left:55px;top:129.88px"><svg width="13" height="15" viewBox="0 0 13 15"><path d="M0.7 0.9H9.6V6.4Q11.8 6.9 11.8 8.6V11Q11.6 12 9.6 12H4.6V13.9L0.7 12z" fill="#f5df96" stroke="#b5a16c" stroke-width="0.9" stroke-linejoin="round"/><path d="M9.6 6.4Q11.8 6.9 11.8 8.6V11Q11.6 12 9.6 12" fill="#fbf0c8" stroke="none"/><path d="M1.1 1.3L6.6 3.4V10L4.6 10.8V13.6L1.1 11.8z" fill="#f9e68e" stroke="#c2a458" stroke-width="0.8" stroke-linejoin="round"/><path d="M7.2 3.8V10.2" stroke="#d9bc6a" stroke-width="0.9"/></svg></div>
<div class="tt" style="left:75.4px;top:128.63px;transform:scaleX(0.9414)">nbproject</div>
<div class="hl" style="left:50px;top:155.85px;width:3px"></div>
<div class="ex" style="left:38.2px;top:150.85px"><svg width="12" height="11" viewBox="0 0 12 11" style="position:absolute;left:0;top:0"><defs><linearGradient id="eg" x1="0" y1="0" x2="0" y2="1"><stop offset="0" stop-color="#fbfbfb"/><stop offset="0.45" stop-color="#f2f2f2"/><stop offset="0.55" stop-color="#e2e2e2"/><stop offset="1" stop-color="#d6d6d6"/></linearGradient></defs><rect x="0.5" y="0.5" width="10.5" height="10" rx="1.2" fill="url(#eg)" stroke="#a3a3a3"/><g><path d="M1.5 5.35h8.5" stroke="#3d5689" stroke-width="1.0"/></g></svg></div>
<div class="ic" style="left:55px;top:148.85px"><svg width="13" height="15" viewBox="0 0 13 15"><path d="M0.7 0.9H9.6V6.4Q11.8 6.9 11.8 8.6V11Q11.6 12 9.6 12H4.6V13.9L0.7 12z" fill="#f5df96" stroke="#b5a16c" stroke-width="0.9" stroke-linejoin="round"/><path d="M9.6 6.4Q11.8 6.9 11.8 8.6V11Q11.6 12 9.6 12" fill="#fbf0c8" stroke="none"/><path d="M1.1 1.3L6.6 3.4V10L4.6 10.8V13.6L1.1 11.8z" fill="#f9e68e" stroke="#c2a458" stroke-width="0.8" stroke-linejoin="round"/><path d="M7.2 3.8V10.2" stroke="#d9bc6a" stroke-width="0.9"/></svg></div>
<div class="tt" style="left:75.4px;top:147.6px;transform:scaleX(0.8413)">src</div>
<div class="hl" style="left:66px;top:174.82px;width:4px"></div>
<div class="ex" style="left:54.2px;top:169.82px"><svg width="12" height="11" viewBox="0 0 12 11" style="position:absolute;left:0;top:0"><defs><linearGradient id="eg" x1="0" y1="0" x2="0" y2="1"><stop offset="0" stop-color="#fbfbfb"/><stop offset="0.45" stop-color="#f2f2f2"/><stop offset="0.55" stop-color="#e2e2e2"/><stop offset="1" stop-color="#d6d6d6"/></linearGradient></defs><rect x="0.5" y="0.5" width="10.5" height="10" rx="1.2" fill="url(#eg)" stroke="#a3a3a3"/><g><path d="M1.5 5.35h8.5" stroke="#3d5689" stroke-width="1.0"/></g></svg></div>
<div class="ic" style="left:72px;top:167.82px"><svg width="13" height="15" viewBox="0 0 13 15"><path d="M0.7 0.9H9.6V6.4Q11.8 6.9 11.8 8.6V11Q11.6 12 9.6 12H4.6V13.9L0.7 12z" fill="#f5df96" stroke="#b5a16c" stroke-width="0.9" stroke-linejoin="round"/><path d="M9.6 6.4Q11.8 6.9 11.8 8.6V11Q11.6 12 9.6 12" fill="#fbf0c8" stroke="none"/><path d="M1.1 1.3L6.6 3.4V10L4.6 10.8V13.6L1.1 11.8z" fill="#f9e68e" stroke="#c2a458" stroke-width="0.8" stroke-linejoin="round"/><path d="M7.2 3.8V10.2" stroke="#d9bc6a" stroke-width="0.9"/></svg></div>
<div class="tt" style="left:91.6px;top:166.57px;transform:scaleX(0.9366)">kristenalbrechtfinalproject</div>
<div class="hl" style="left:77px;top:193.79px;width:11px"></div>
<div class="ic" style="left:88px;top:186.79px"><svg width="12" height="14" viewBox="0 0 12 14"><defs><linearGradient id="dg" x1="0" y1="0" x2="0" y2="1"><stop offset="0" stop-color="#dfe7f0"/><stop offset="1" stop-color="#f6f8fb"/></linearGradient></defs><path d="M0.6 0.6H8.4L10.9 3.1V13H0.6z" fill="url(#dg)" stroke="#6f757d" stroke-width="1.2" stroke-linejoin="round"/><path d="M8.4 0.9V3.1H10.6" fill="#fff" stroke="#9aa0a8" stroke-width="0.7"/><path d="M5.6 2.6l2.2 2.2-2.2 2.2-2.2-2.2z" fill="#e9bd62" stroke="#b08a3a" stroke-width="0.6"/><rect x="2" y="6.3" width="3.4" height="4.3" rx="1.2" fill="#5d95c2" stroke="#2f5f8a" stroke-width="0.6"/><circle cx="7.6" cy="8.4" r="1.9" fill="#ec8c86" stroke="#b25a55" stroke-width="0.6"/></svg></div>
<div class="tt" style="left:108.5px;top:185.54px;transform:scaleX(0.9319)">Almond.java</div>
<div class="hl" style="left:77px;top:212.76px;width:11px"></div>
<div class="ic" style="left:88px;top:205.76px"><svg width="12" height="14" viewBox="0 0 12 14"><defs><linearGradient id="dg" x1="0" y1="0" x2="0" y2="1"><stop offset="0" stop-color="#dfe7f0"/><stop offset="1" stop-color="#f6f8fb"/></linearGradient></defs><path d="M0.6 0.6H8.4L10.9 3.1V13H0.6z" fill="url(#dg)" stroke="#6f757d" stroke-width="1.2" stroke-linejoin="round"/><path d="M8.4 0.9V3.1H10.6" fill="#fff" stroke="#9aa0a8" stroke-width="0.7"/><path d="M5.6 2.8l2 2-2 2-2-2z" fill="#fff" stroke="#7d848c" stroke-width="0.8"/><circle cx="3.7" cy="8.3" r="1.7" fill="#fff" stroke="#7d848c" stroke-width="0.8"/><circle cx="7.5" cy="8.3" r="1.7" fill="#fff" stroke="#7d848c" stroke-width="0.8"/></svg></div>
<div class="tt" style="left:108.5px;top:204.51px;transform:scaleX(0.9367)">Entity.java</div>
<div class="hl" style="left:77px;top:231.73px;width:11px"></div>
<div class="ic" style="left:88px;top:224.73px"><svg width="12" height="14" viewBox="0 0 12 14"><defs><linearGradient id="dg" x1="0" y1="0" x2="0" y2="1"><stop offset="0" stop-color="#dfe7f0"/><stop offset="1" stop-color="#f6f8fb"/></linearGradient></defs><path d="M0.6 0.6H8.4L10.9 3.1V13H0.6z" fill="url(#dg)" stroke="#6f757d" stroke-width="1.2" stroke-linejoin="round"/><path d="M8.4 0.9V3.1H10.6" fill="#fff" stroke="#9aa0a8" stroke-width="0.7"/><path d="M2 8.6h4" stroke="#666c74" stroke-width="1.2"/><circle cx="7.7" cy="8.6" r="1.7" fill="#fff" stroke="#666c74" stroke-width="0.9"/><rect x="1.6" y="7.4" width="2.2" height="2.4" fill="#7a8088"/></svg></div>
<div class="tt" style="left:108.5px;top:223.48px;transform:scaleX(0.9529)">IEntity.java</div>
<div class="hl" style="left:77px;top:250.7px;width:11px"></div>
<div class="ic" style="left:88px;top:243.7px"><svg width="12" height="14" viewBox="0 0 12 14"><defs><linearGradient id="dg" x1="0" y1="0" x2="0" y2="1"><stop offset="0" stop-color="#dfe7f0"/><stop offset="1" stop-color="#f6f8fb"/></linearGradient></defs><path d="M0.6 0.6H8.4L10.9 3.1V13H0.6z" fill="url(#dg)" stroke="#6f757d" stroke-width="1.2" stroke-linejoin="round"/><path d="M8.4 0.9V3.1H10.6" fill="#fff" stroke="#9aa0a8" stroke-width="0.7"/><path d="M5.6 2.6l2.2 2.2-2.2 2.2-2.2-2.2z" fill="#e9bd62" stroke="#b08a3a" stroke-width="0.6"/><rect x="2" y="6.3" width="3.4" height="4.3" rx="1.2" fill="#5d95c2" stroke="#2f5f8a" stroke-width="0.6"/><circle cx="7.6" cy="8.4" r="1.9" fill="#ec8c86" stroke="#b25a55" stroke-width="0.6"/></svg></div>
<div class="tt" style="left:108.5px;top:242.45px;transform:scaleX(0.8704)">Maze.java</div>
<div class="hl" style="left:77px;top:269.67px;width:11px"></div>
<div class="ic" style="left:88px;top:262.67px"><svg width="12" height="14" viewBox="0 0 12 14"><path d="M1.5 2.5H7.5L9.8 4.8V12.3H1.5z" fill="#fff" stroke="#000" stroke-width="1.2" stroke-linejoin="round"/><path d="M7.5 2.5V4.8H9.8" fill="none" stroke="#000" stroke-width="0.9"/><path d="M4.4 5.6Q5.6 4.6 6.6 5.6Q7 6.6 5.6 7.6V8.8" fill="none" stroke="#e09090" stroke-width="1"/></svg></div>
<div class="tt sel" style="left:108.5px;top:261.42px;transform:scaleX(0.8996)">Maze.txt</div>
<div class="hl" style="left:77px;top:288.64px;width:11px"></div>
<div class="ic" style="left:88px;top:281.64px"><svg width="12" height="14" viewBox="0 0 12 14"><defs><linearGradient id="dg" x1="0" y1="0" x2="0" y2="1"><stop offset="0" stop-color="#dfe7f0"/><stop offset="1" stop-color="#f6f8fb"/></linearGradient></defs><path d="M0.6 0.6H8.4L10.9 3.1V13H0.6z" fill="url(#dg)" stroke="#6f757d" stroke-width="1.2" stroke-linejoin="round"/><path d="M8.4 0.9V3.1H10.6" fill="#fff" stroke="#9aa0a8" stroke-width="0.7"/><path d="M5.6 2.8l2 2-2 2-2-2z" fill="#fff" stroke="#7d848c" stroke-width="0.8"/><circle cx="3.7" cy="8.3" r="1.7" fill="#fff" stroke="#7d848c" stroke-width="0.8"/><circle cx="7.5" cy="8.3" r="1.7" fill="#fff" stroke="#7d848c" stroke-width="0.8"/></svg></div>
<div class="tt" style="left:108.5px;top:280.39px;transform:scaleX(0.9113)">Nuts.java</div>
<div class="hl" style="left:77px;top:307.61px;width:11px"></div>
<div class="ic" style="left:88px;top:300.61px"><svg width="12" height="14" viewBox="0 0 12 14"><defs><linearGradient id="dg" x1="0" y1="0" x2="0" y2="1"><stop offset="0" stop-color="#dfe7f0"/><stop offset="1" stop-color="#f6f8fb"/></linearGradient></defs><path d="M0.6 0.6H8.4L10.9 3.1V13H0.6z" fill="url(#dg)" stroke="#6f757d" stroke-width="1.2" stroke-linejoin="round"/><path d="M8.4 0.9V3.1H10.6" fill="#fff" stroke="#9aa0a8" stroke-width="0.7"/><path d="M5.6 2.6l2.2 2.2-2.2 2.2-2.2-2.2z" fill="#e9bd62" stroke="#b08a3a" stroke-width="0.6"/><rect x="2" y="6.3" width="3.4" height="4.3" rx="1.2" fill="#5d95c2" stroke="#2f5f8a" stroke-width="0.6"/><circle cx="7.6" cy="8.4" r="1.9" fill="#ec8c86" stroke="#b25a55" stroke-width="0.6"/></svg></div>
<div class="tt" style="left:108.5px;top:299.36px;transform:scaleX(0.897)">Peanut.java</div>
<div class="hl" style="left:77px;top:326.58px;width:11px"></div>
<div class="ic" style="left:88px;top:319.58px"><svg width="12" height="14" viewBox="0 0 12 14"><defs><linearGradient id="dg" x1="0" y1="0" x2="0" y2="1"><stop offset="0" stop-color="#dfe7f0"/><stop offset="1" stop-color="#f6f8fb"/></linearGradient></defs><path d="M0.6 0.6H8.4L10.9 3.1V13H0.6z" fill="url(#dg)" stroke="#6f757d" stroke-width="1.2" stroke-linejoin="round"/><path d="M8.4 0.9V3.1H10.6" fill="#fff" stroke="#9aa0a8" stroke-width="0.7"/><path d="M5.6 2.6l2.2 2.2-2.2 2.2-2.2-2.2z" fill="#e9bd62" stroke="#b08a3a" stroke-width="0.6"/><rect x="2" y="6.3" width="3.4" height="4.3" rx="1.2" fill="#5d95c2" stroke="#2f5f8a" stroke-width="0.6"/><circle cx="7.6" cy="8.4" r="1.9" fill="#ec8c86" stroke="#b25a55" stroke-width="0.6"/></svg></div>
<div class="tt" style="left:108.5px;top:318.33px;transform:scaleX(0.9167)">Squirrel.java</div>
<div class="hl" style="left:77px;top:345.55px;width:11px"></div>
<div class="ic" style="left:88px;top:338.55px"><svg width="12" height="14" viewBox="0 0 12 14"><defs><linearGradient id="dg" x1="0" y1="0" x2="0" y2="1"><stop offset="0" stop-color="#dfe7f0"/><stop offset="1" stop-color="#f6f8fb"/></linearGradient></defs><path d="M0.6 0.6H8.4L10.9 3.1V13H0.6z" fill="url(#dg)" stroke="#6f757d" stroke-width="1.2" stroke-linejoin="round"/><path d="M8.4 0.9V3.1H10.6" fill="#fff" stroke="#9aa0a8" stroke-width="0.7"/><path d="M5.6 2.6l2.2 2.2-2.2 2.2-2.2-2.2z" fill="#e9bd62" stroke="#b08a3a" stroke-width="0.6"/><rect x="2" y="6.3" width="3.4" height="4.3" rx="1.2" fill="#5d95c2" stroke="#2f5f8a" stroke-width="0.6"/><circle cx="7" cy="8.4" r="1.9" fill="#ec8c86" stroke="#b25a55" stroke-width="0.6"/><path d="M7.6 6.2l4.2 3.7-4.2 3.7z" fill="#86d060" stroke="#3f8a2a" stroke-width="0.8" stroke-linejoin="round"/></svg></div>
<div class="tt" style="left:108.5px;top:337.3px;transform:scaleX(0.8862)">TestMaze.java</div>
<div class="hl" style="left:50px;top:364.52px;width:3px"></div>
<div class="ex" style="left:38.2px;top:359.52px"><svg width="12" height="11" viewBox="0 0 12 11" style="position:absolute;left:0;top:0"><defs><linearGradient id="eg" x1="0" y1="0" x2="0" y2="1"><stop offset="0" stop-color="#fbfbfb"/><stop offset="0.45" stop-color="#f2f2f2"/><stop offset="0.55" stop-color="#e2e2e2"/><stop offset="1" stop-color="#d6d6d6"/></linearGradient></defs><rect x="0.5" y="0.5" width="10.5" height="10" rx="1.2" fill="url(#eg)" stroke="#a3a3a3"/><g><path d="M1.5 5.35h8.5" stroke="#3d5689" stroke-width="1.0"/><path d="M5.75 1.7v7.4" stroke="#3d5689" stroke-width="1.0"/></g></svg></div>
<div class="ic" style="left:55px;top:357.52px"><svg width="13" height="15" viewBox="0 0 13 15"><path d="M0.7 0.9H9.6V6.4Q11.8 6.9 11.8 8.6V11Q11.6 12 9.6 12H4.6V13.9L0.7 12z" fill="#f5df96" stroke="#b5a16c" stroke-width="0.9" stroke-linejoin="round"/><path d="M9.6 6.4Q11.8 6.9 11.8 8.6V11Q11.6 12 9.6 12" fill="#fbf0c8" stroke="none"/><path d="M1.1 1.3L6.6 3.4V10L4.6 10.8V13.6L1.1 11.8z" fill="#f9e68e" stroke="#c2a458" stroke-width="0.8" stroke-linejoin="round"/><path d="M7.2 3.8V10.2" stroke="#d9bc6a" stroke-width="0.9"/></svg></div>
<div class="tt" style="left:75.4px;top:356.27px;transform:scaleX(0.8888)">test</div>
<div class="hl" style="left:50px;top:383.49px;width:3px"></div>
<div class="ex" style="left:38.2px;top:378.49px"><svg width="12" height="11" viewBox="0 0 12 11" style="position:absolute;left:0;top:0"><defs><linearGradient id="eg" x1="0" y1="0" x2="0" y2="1"><stop offset="0" stop-color="#fbfbfb"/><stop offset="0.45" stop-color="#f2f2f2"/><stop offset="0.55" stop-color="#e2e2e2"/><stop offset="1" stop-color="#d6d6d6"/></linearGradient></defs><rect x="0.5" y="0.5" width="10.5" height="10" rx="1.2" fill="url(#eg)" stroke="#a3a3a3"/><g><path d="M1.5 5.35h8.5" stroke="#3d5689" stroke-width="1.0"/><path d="M5.75 1.7v7.4" stroke="#3d5689" stroke-width="1.0"/></g></svg></div>
<div class="ic" style="left:55px;top:376.49px"><svg width="12" height="14" viewBox="0 0 12 14"><defs><linearGradient id="dg" x1="0" y1="0" x2="0" y2="1"><stop offset="0" stop-color="#dfe7f0"/><stop offset="1" stop-color="#f6f8fb"/></linearGradient></defs><path d="M0.6 0.6H8.4L10.9 3.1V13H0.6z" fill="url(#dg)" stroke="#6f757d" stroke-width="1.2" stroke-linejoin="round"/><path d="M8.4 0.9V3.1H10.6" fill="#fff" stroke="#9aa0a8" stroke-width="0.7"/><path d="M-0.5 6.6L4.2 2.2L8.6 6.6z" fill="#f2b772" stroke="#b8782e" stroke-width="0.8" stroke-linejoin="round"/><path d="M2.5 10h5M6.2 8.4l1.6 1.6-1.6 1.6" stroke="#3d6fb0" stroke-width="0.9" fill="none"/></svg></div>
<div class="tt" style="left:75.4px;top:375.24px;transform:scaleX(0.9587)">build.xml</div>
<div class="hl" style="left:44px;top:402.46px;width:11px"></div>
<div class="ic" style="left:55px;top:395.46px"><svg width="12" height="14" viewBox="0 0 12 14"><path d="M0.6 0.6H8.4L10.9 3.1V13H0.6z" fill="#f8fafd" stroke="#5f86b8" stroke-width="1.1" stroke-linejoin="round"/><path d="M8.4 0.9V3.1H10.6" fill="#fff" stroke="#8aa8cc" stroke-width="0.7"/><circle cx="5.6" cy="7.6" r="2.5" fill="#4cbc84" stroke="#2a8c9c" stroke-width="0.7"/></svg></div>
<div class="tt" style="left:75.4px;top:394.21px;transform:scaleX(0.9307)">manifest.mf</div>
<div class="hl" style="left:34px;top:421.43px;width:3px"></div>
<div class="ex" style="left:22.2px;top:416.43px"><svg width="12" height="11" viewBox="0 0 12 11" style="position:absolute;left:0;top:0"><defs><linearGradient id="eg" x1="0" y1="0" x2="0" y2="1"><stop offset="0" stop-color="#fbfbfb"/><stop offset="0.45" stop-color="#f2f2f2"/><stop offset="0.55" stop-color="#e2e2e2"/><stop offset="1" stop-color="#d6d6d6"/></linearGradient></defs><rect x="0.5" y="0.5" width="10.5" height="10" rx="1.2" fill="url(#eg)" stroke="#a3a3a3"/><g><path d="M1.5 5.35h8.5" stroke="#3d5689" stroke-width="1.0"/><path d="M5.75 1.7v7.4" stroke="#3d5689" stroke-width="1.0"/></g></svg></div>
<div class="ic" style="left:39px;top:414.43px"><svg width="13" height="15" viewBox="0 0 13 15"><path d="M0.7 0.9H9.6V6.4Q11.8 6.9 11.8 8.6V11Q11.6 12 9.6 12H4.6V13.9L0.7 12z" fill="#f5df96" stroke="#b5a16c" stroke-width="0.9" stroke-linejoin="round"/><path d="M9.6 6.4Q11.8 6.9 11.8 8.6V11Q11.6 12 9.6 12" fill="#fbf0c8" stroke="none"/><path d="M1.1 1.3L6.6 3.4V10L4.6 10.8V13.6L1.1 11.8z" fill="#f9e68e" stroke="#c2a458" stroke-width="0.8" stroke-linejoin="round"/><path d="M7.2 3.8V10.2" stroke="#d9bc6a" stroke-width="0.9"/></svg></div>
<div class="tt" style="left:58.8px;top:413.18px;transform:scaleX(0.9225)">KristenAlbrechtProject1</div>
<div class="hl" style="left:34px;top:440.4px;width:3px"></div>
<div class="ex" style="left:22.2px;top:435.4px"><svg width="12" height="11" viewBox="0 0 12 11" style="position:absolute;left:0;top:0"><defs><linearGradient id="eg" x1="0" y1="0" x2="0" y2="1"><stop offset="0" stop-color="#fbfbfb"/><stop offset="0.45" stop-color="#f2f2f2"/><stop offset="0.55" stop-color="#e2e2e2"/><stop offset="1" stop-color="#d6d6d6"/></linearGradient></defs><rect x="0.5" y="0.5" width="10.5" height="10" rx="1.2" fill="url(#eg)" stroke="#a3a3a3"/><g><path d="M1.5 5.35h8.5" stroke="#3d5689" stroke-width="1.0"/><path d="M5.75 1.7v7.4" stroke="#3d5689" stroke-width="1.0"/></g></svg></div>
<div class="ic" style="left:39px;top:433.4px"><svg width="13" height="15" viewBox="0 0 13 15"><path d="M0.7 0.9H9.6V6.4Q11.8 6.9 11.8 8.6V11Q11.6 12 9.6 12H4.6V13.9L0.7 12z" fill="#f5df96" stroke="#b5a16c" stroke-width="0.9" stroke-linejoin="round"/><path d="M9.6 6.4Q11.8 6.9 11.8 8.6V11Q11.6 12 9.6 12" fill="#fbf0c8" stroke="none"/><path d="M1.1 1.3L6.6 3.4V10L4.6 10.8V13.6L1.1 11.8z" fill="#f9e68e" stroke="#c2a458" stroke-width="0.8" stroke-linejoin="round"/><path d="M7.2 3.8V10.2" stroke="#d9bc6a" stroke-width="0.9"/></svg></div>
<div class="tt" style="left:58.8px;top:432.15px;transform:scaleX(0.9225)">KristenAlbrechtProject2</div>
<div class="hl" style="left:34px;top:459.37px;width:3px"></div>
<div class="ex" style="left:22.2px;top:454.37px"><svg width="12" height="11" viewBox="0 0 12 11" style="position:absolute;left:0;top:0"><defs><linearGradient id="eg" x1="0" y1="0" x2="0" y2="1"><stop offset="0" stop-color="#fbfbfb"/><stop offset="0.45" stop-color="#f2f2f2"/><stop offset="0.55" stop-color="#e2e2e2"/><stop offset="1" stop-color="#d6d6d6"/></linearGradient></defs><rect x="0.5" y="0.5" width="10.5" height="10" rx="1.2" fill="url(#eg)" stroke="#a3a3a3"/><g><path d="M1.5 5.35h8.5" stroke="#3d5689" stroke-width="1.0"/><path d="M5.75 1.7v7.4" stroke="#3d5689" stroke-width="1.0"/></g></svg></div>
<div class="ic" style="left:39px;top:452.37px"><svg width="13" height="15" viewBox="0 0 13 15"><path d="M0.7 0.9H9.6V6.4Q11.8 6.9 11.8 8.6V11Q11.6 12 9.6 12H4.6V13.9L0.7 12z" fill="#f5df96" stroke="#b5a16c" stroke-width="0.9" stroke-linejoin="round"/><path d="M9.6 6.4Q11.8 6.9 11.8 8.6V11Q11.6 12 9.6 12" fill="#fbf0c8" stroke="none"/><path d="M1.1 1.3L6.6 3.4V10L4.6 10.8V13.6L1.1 11.8z" fill="#f9e68e" stroke="#c2a458" stroke-width="0.8" stroke-linejoin="round"/><path d="M7.2 3.8V10.2" stroke="#d9bc6a" stroke-width="0.9"/></svg></div>
<div class="ic" style="left:52px;top:458.37px"><svg width="7" height="8" viewBox="0 0 7 8"><rect x="0.5" y="0.5" width="6" height="7" rx="3" fill="#3a8fe0" stroke="#2a6cc0"/><rect x="2" y="3" width="3" height="3" fill="#cfe6ff"/></svg></div>
<div class="tt" style="left:58.8px;top:451.12px;transform:scaleX(0.9225)">KristenAlbrechtProject4</div>
<div class="hl" style="left:34px;top:478.34px;width:3px"></div>
<div class="ex" style="left:22.2px;top:473.34px"><svg width="12" height="11" viewBox="0 0 12 11" style="position:absolute;left:0;top:0"><defs><linearGradient id="eg" x1="0" y1="0" x2="0" y2="1"><stop offset="0" stop-color="#fbfbfb"/><stop offset="0.45" stop-color="#f2f2f2"/><stop offset="0.55" stop-color="#e2e2e2"/><stop offset="1" stop-color="#d6d6d6"/></linearGradient></defs><rect x="0.5" y="0.5" width="10.5" height="10" rx="1.2" fill="url(#eg)" stroke="#a3a3a3"/><g><path d="M1.5 5.35h8.5" stroke="#3d5689" stroke-width="1.0"/><path d="M5.75 1.7v7.4" stroke="#3d5689" stroke-width="1.0"/></g></svg></div>
<div class="ic" style="left:39px;top:471.34px"><svg width="13" height="15" viewBox="0 0 13 15"><path d="M0.7 0.9H9.6V6.4Q11.8 6.9 11.8 8.6V11Q11.6 12 9.6 12H4.6V13.9L0.7 12z" fill="#f5df96" stroke="#b5a16c" stroke-width="0.9" stroke-linejoin="round"/><path d="M9.6 6.4Q11.8 6.9 11.8 8.6V11Q11.6 12 9.6 12" fill="#fbf0c8" stroke="none"/><path d="M1.1 1.3L6.6 3.4V10L4.6 10.8V13.6L1.1 11.8z" fill="#f9e68e" stroke="#c2a458" stroke-width="0.8" stroke-linejoin="round"/><path d="M7.2 3.8V10.2" stroke="#d9bc6a" stroke-width="0.9"/></svg></div>
<div class="tt" style="left:58.8px;top:470.09px;transform:scaleX(0.9225)">KristenAlbrechtProject5</div>
<div class="hl" style="left:34px;top:497.31px;width:3px"></div>
<div class="ex" style="left:22.2px;top:492.31px"><svg width="12" height="11" viewBox="0 0 12 11" style="position:absolute;left:0;top:0"><defs><linearGradient id="eg" x1="0" y1="0" x2="0" y2="1"><stop offset="0" stop-color="#fbfbfb"/><stop offset="0.45" stop-color="#f2f2f2"/><stop offset="0.55" stop-color="#e2e2e2"/><stop offset="1" stop-color="#d6d6d6"/></linearGradient></defs><rect x="0.5" y="0.5" width="10.5" height="10" rx="1.2" fill="url(#eg)" stroke="#a3a3a3"/><g><path d="M1.5 5.35h8.5" stroke="#3d5689" stroke-width="1.0"/><path d="M5.75 1.7v7.4" stroke="#3d5689" stroke-width="1.0"/></g></svg></div>
<div class="ic" style="left:39px;top:490.31px"><svg width="13" height="15" viewBox="0 0 13 15"><path d="M0.7 0.9H9.6V6.4Q11.8 6.9 11.8 8.6V11Q11.6 12 9.6 12H4.6V13.9L0.7 12z" fill="#f5df96" stroke="#b5a16c" stroke-width="0.9" stroke-linejoin="round"/><path d="M9.6 6.4Q11.8 6.9 11.8 8.6V11Q11.6 12 9.6 12" fill="#fbf0c8" stroke="none"/><path d="M1.1 1.3L6.6 3.4V10L4.6 10.8V13.6L1.1 11.8z" fill="#f9e68e" stroke="#c2a458" stroke-width="0.8" stroke-linejoin="round"/><path d="M7.2 3.8V10.2" stroke="#d9bc6a" stroke-width="0.9"/></svg></div>
<div class="tt" style="left:58.8px;top:489.06px;transform:scaleX(0.9225)">KristenAlbrechtProject6</div>
<div class="hl" style="left:34px;top:516.28px;width:3px"></div>
<div class="ex" style="left:22.2px;top:511.28px"><svg width="12" height="11" viewBox="0 0 12 11" style="position:absolute;left:0;top:0"><defs><linearGradient id="eg" x1="0" y1="0" x2="0" y2="1"><stop offset="0" stop-color="#fbfbfb"/><stop offset="0.45" stop-color="#f2f2f2"/><stop offset="0.55" stop-color="#e2e2e2"/><stop offset="1" stop-color="#d6d6d6"/></linearGradient></defs><rect x="0.5" y="0.5" width="10.5" height="10" rx="1.2" fill="url(#eg)" stroke="#a3a3a3"/><g><path d="M1.5 5.35h8.5" stroke="#3d5689" stroke-width="1.0"/><path d="M5.75 1.7v7.4" stroke="#3d5689" stroke-width="1.0"/></g></svg></div>
<div class="ic" style="left:39px;top:509.28px"><svg width="13" height="15" viewBox="0 0 13 15"><path d="M0.7 0.9H9.6V6.4Q11.8 6.9 11.8 8.6V11Q11.6 12 9.6 12H4.6V13.9L0.7 12z" fill="#f5df96" stroke="#b5a16c" stroke-width="0.9" stroke-linejoin="round"/><path d="M9.6 6.4Q11.8 6.9 11.8 8.6V11Q11.6 12 9.6 12" fill="#fbf0c8" stroke="none"/><path d="M1.1 1.3L6.6 3.4V10L4.6 10.8V13.6L1.1 11.8z" fill="#f9e68e" stroke="#c2a458" stroke-width="0.8" stroke-linejoin="round"/><path d="M7.2 3.8V10.2" stroke="#d9bc6a" stroke-width="0.9"/></svg></div>
<div class="tt" style="left:58.8px;top:508.03px;transform:scaleX(0.9225)">KristenAlbrechtProject7</div>
<div class="hl" style="left:34px;top:535.25px;width:3px"></div>
<div class="ex" style="left:22.2px;top:530.25px"><svg width="12" height="11" viewBox="0 0 12 11" style="position:absolute;left:0;top:0"><defs><linearGradient id="eg" x1="0" y1="0" x2="0" y2="1"><stop offset="0" stop-color="#fbfbfb"/><stop offset="0.45" stop-color="#f2f2f2"/><stop offset="0.55" stop-color="#e2e2e2"/><stop offset="1" stop-color="#d6d6d6"/></linearGradient></defs><rect x="0.5" y="0.5" width="10.5" height="10" rx="1.2" fill="url(#eg)" stroke="#a3a3a3"/><g><path d="M1.5 5.35h8.5" stroke="#3d5689" stroke-width="1.0"/></g></svg></div>
<div class="ic" style="left:39px;top:528.25px"><svg width="13" height="15" viewBox="0 0 13 15"><path d="M0.7 0.9H9.6V6.4Q11.8 6.9 11.8 8.6V11Q11.6 12 9.6 12H4.6V13.9L0.7 12z" fill="#f5df96" stroke="#b5a16c" stroke-width="0.9" stroke-linejoin="round"/><path d="M9.6 6.4Q11.8 6.9 11.8 8.6V11Q11.6 12 9.6 12" fill="#fbf0c8" stroke="none"/><path d="M1.1 1.3L6.6 3.4V10L4.6 10.8V13.6L1.1 11.8z" fill="#f9e68e" stroke="#c2a458" stroke-width="0.8" stroke-linejoin="round"/><path d="M7.2 3.8V10.2" stroke="#d9bc6a" stroke-width="0.9"/></svg></div>
<div class="tt" style="left:58.8px;top:527.0px;transform:scaleX(0.9225)">KristenAlbrechtProject8</div>
<div class="hl" style="left:50px;top:554.22px;width:3px"></div>
<div class="ex" style="left:38.2px;top:549.22px"><svg width="12" height="11" viewBox="0 0 12 11" style="position:absolute;left:0;top:0"><defs><linearGradient id="eg" x1="0" y1="0" x2="0" y2="1"><stop offset="0" stop-color="#fbfbfb"/><stop offset="0.45" stop-color="#f2f2f2"/><stop offset="0.55" stop-color="#e2e2e2"/><stop offset="1" stop-color="#d6d6d6"/></linearGradient></defs><rect x="0.5" y="0.5" width="10.5" height="10" rx="1.2" fill="url(#eg)" stroke="#a3a3a3"/><g><path d="M1.5 5.35h8.5" stroke="#3d5689" stroke-width="1.0"/><path d="M5.75 1.7v7.4" stroke="#3d5689" stroke-width="1.0"/></g></svg></div>
<div class="ic" style="left:55px;top:547.22px"><svg width="13" height="15" viewBox="0 0 13 15"><path d="M0.7 0.9H9.6V6.4Q11.8 6.9 11.8 8.6V11Q11.6 12 9.6 12H4.6V13.9L0.7 12z" fill="#f5df96" stroke="#b5a16c" stroke-width="0.9" stroke-linejoin="round"/><path d="M9.6 6.4Q11.8 6.9 11.8 8.6V11Q11.6 12 9.6 12" fill="#fbf0c8" stroke="none"/><path d="M1.1 1.3L6.6 3.4V10L4.6 10.8V13.6L1.1 11.8z" fill="#f9e68e" stroke="#c2a458" stroke-width="0.8" stroke-linejoin="round"/><path d="M7.2 3.8V10.2" stroke="#d9bc6a" stroke-width="0.9"/></svg></div>
<div class="tt" style="left:75.4px;top:545.97px;transform:scaleX(0.9506)">build</div>
<div class="hl" style="left:50px;top:573.19px;width:3px"></div>
<div class="ex" style="left:38.2px;top:568.19px"><svg width="12" height="11" viewBox="0 0 12 11" style="position:absolute;left:0;top:0"><defs><linearGradient id="eg" x1="0" y1="0" x2="0" y2="1"><stop offset="0" stop-color="#fbfbfb"/><stop offset="0.45" stop-color="#f2f2f2"/><stop offset="0.55" stop-color="#e2e2e2"/><stop offset="1" stop-color="#d6d6d6"/></linearGradient></defs><rect x="0.5" y="0.5" width="10.5" height="10" rx="1.2" fill="url(#eg)" stroke="#a3a3a3"/><g><path d="M1.5 5.35h8.5" stroke="#3d5689" stroke-width="1.0"/><path d="M5.75 1.7v7.4" stroke="#3d5689" stroke-width="1.0"/></g></svg></div>
<div class="ic" style="left:55px;top:566.19px"><svg width="13" height="15" viewBox="0 0 13 15"><path d="M0.7 0.9H9.6V6.4Q11.8 6.9 11.8 8.6V11Q11.6 12 9.6 12H4.6V13.9L0.7 12z" fill="#f5df96" stroke="#b5a16c" stroke-width="0.9" stroke-linejoin="round"/><path d="M9.6 6.4Q11.8 6.9 11.8 8.6V11Q11.6 12 9.6 12" fill="#fbf0c8" stroke="none"/><path d="M1.1 1.3L6.6 3.4V10L4.6 10.8V13.6L1.1 11.8z" fill="#f9e68e" stroke="#c2a458" stroke-width="0.8" stroke-linejoin="round"/><path d="M7.2 3.8V10.2" stroke="#d9bc6a" stroke-width="0.9"/></svg></div>
<div class="tt" style="left:75.4px;top:564.94px;transform:scaleX(0.9414)">nbproject</div>
<div class="hl" style="left:50px;top:592.16px;width:3px"></div>
<div class="ex" style="left:38.2px;top:587.16px"><svg width="12" height="11" viewBox="0 0 12 11" style="position:absolute;left:0;top:0"><defs><linearGradient id="eg" x1="0" y1="0" x2="0" y2="1"><stop offset="0" stop-color="#fbfbfb"/><stop offset="0.45" stop-color="#f2f2f2"/><stop offset="0.55" stop-color="#e2e2e2"/><stop offset="1" stop-color="#d6d6d6"/></linearGradient></defs><rect x="0.5" y="0.5" width="10.5" height="10" rx="1.2" fill="url(#eg)" stroke="#a3a3a3"/><g><path d="M1.5 5.35h8.5" stroke="#3d5689" stroke-width="1.0"/><path d="M5.75 1.7v7.4" stroke="#3d5689" stroke-width="1.0"/></g></svg></div>
<div class="ic" style="left:55px;top:585.16px"><svg width="13" height="15" viewBox="0 0 13 15"><path d="M0.7 0.9H9.6V6.4Q11.8 6.9 11.8 8.6V11Q11.6 12 9.6 12H4.6V13.9L0.7 12z" fill="#f5df96" stroke="#b5a16c" stroke-width="0.9" stroke-linejoin="round"/><path d="M9.6 6.4Q11.8 6.9 11.8 8.6V11Q11.6 12 9.6 12" fill="#fbf0c8" stroke="none"/><path d="M1.1 1.3L6.6 3.4V10L4.6 10.8V13.6L1.1 11.8z" fill="#f9e68e" stroke="#c2a458" stroke-width="0.8" stroke-linejoin="round"/><path d="M7.2 3.8V10.2" stroke="#d9bc6a" stroke-width="0.9"/></svg></div>
<div class="tt" style="left:75.4px;top:583.91px;transform:scaleX(0.8413)">src</div>
<div class="hl" style="left:44px;top:611.13px;width:11px"></div>
<div class="ic" style="left:55px;top:604.13px"><svg width="13" height="15" viewBox="0 0 13 15"><path d="M0.7 0.9H9.6V6.4Q11.8 6.9 11.8 8.6V11Q11.6 12 9.6 12H4.6V13.9L0.7 12z" fill="#f5df96" stroke="#b5a16c" stroke-width="0.9" stroke-linejoin="round"/><path d="M9.6 6.4Q11.8 6.9 11.8 8.6V11Q11.6 12 9.6 12" fill="#fbf0c8" stroke="none"/><path d="M1.1 1.3L6.6 3.4V10L4.6 10.8V13.6L1.1 11.8z" fill="#f9e68e" stroke="#c2a458" stroke-width="0.8" stroke-linejoin="round"/><path d="M7.2 3.8V10.2" stroke="#d9bc6a" stroke-width="0.9"/></svg></div>
<div class="tt" style="left:75.4px;top:602.88px;transform:scaleX(0.8888)">test</div>
<div class="hl" style="left:44px;top:630.1px;width:11px"></div>
<div class="ic" style="left:55px;top:623.1px"><svg width="12" height="14" viewBox="0 0 12 14"><defs><linearGradient id="dg" x1="0" y1="0" x2="0" y2="1"><stop offset="0" stop-color="#dfe7f0"/><stop offset="1" stop-color="#f6f8fb"/></linearGradient></defs><path d="M0.6 0.6H8.4L10.9 3.1V13H0.6z" fill="url(#dg)" stroke="#80868e" stroke-width="1.0" stroke-linejoin="round"/><path d="M8.4 0.9V3.1H10.6" fill="#fff" stroke="#9aa0a8" stroke-width="0.7"/></svg></div>
<div class="tt" style="left:75.4px;top:621.85px;transform:scaleX(0.9246)">Boats.txt</div>
<div class="hl" style="left:50px;top:649.07px;width:3px"></div>
<div class="ex" style="left:38.2px;top:644.07px"><svg width="12" height="11" viewBox="0 0 12 11" style="position:absolute;left:0;top:0"><defs><linearGradient id="eg" x1="0" y1="0" x2="0" y2="1"><stop offset="0" stop-color="#fbfbfb"/><stop offset="0.45" stop-color="#f2f2f2"/><stop offset="0.55" stop-color="#e2e2e2"/><stop offset="1" stop-color="#d6d6d6"/></linearGradient></defs><rect x="0.5" y="0.5" width="10.5" height="10" rx="1.2" fill="url(#eg)" stroke="#a3a3a3"/><g><path d="M1.5 5.35h8.5" stroke="#3d5689" stroke-width="1.0"/><path d="M5.75 1.7v7.4" stroke="#3d5689" stroke-width="1.0"/></g></svg></div>
<div class="ic" style="left:55px;top:642.07px"><svg width="12" height="14" viewBox="0 0 12 14"><defs><linearGradient id="dg" x1="0" y1="0" x2="0" y2="1"><stop offset="0" stop-color="#dfe7f0"/><stop offset="1" stop-color="#f6f8fb"/></linearGradient></defs><path d="M0.6 0.6H8.4L10.9 3.1V13H0.6z" fill="url(#dg)" stroke="#6f757d" stroke-width="1.2" stroke-linejoin="round"/><path d="M8.4 0.9V3.1H10.6" fill="#fff" stroke="#9aa0a8" stroke-width="0.7"/><path d="M-0.5 6.6L4.2 2.2L8.6 6.6z" fill="#f2b772" stroke="#b8782e" stroke-width="0.8" stroke-linejoin="round"/><path d="M2.5 10h5M6.2 8.4l1.6 1.6-1.6 1.6" stroke="#3d6fb0" stroke-width="0.9" fill="none"/></svg></div>
<div class="tt" style="left:75.4px;top:640.82px;transform:scaleX(0.9587)">build.xml</div>
<div class="hl" style="left:44px;top:668.04px;width:11px"></div>
<div class="ic" style="left:55px;top:661.04px"><svg width="12" height="14" viewBox="0 0 12 14"><path d="M0.6 0.6H8.4L10.9 3.1V13H0.6z" fill="#f8fafd" stroke="#5f86b8" stroke-width="1.1" stroke-linejoin="round"/><path d="M8.4 0.9V3.1H10.6" fill="#fff" stroke="#8aa8cc" stroke-width="0.7"/><circle cx="5.6" cy="7.6" r="2.5" fill="#4cbc84" stroke="#2a8c9c" stroke-width="0.7"/></svg></div>
<div class="tt" style="left:75.4px;top:659.79px;transform:scaleX(0.9307)">manifest.mf</div>
<div class="hl" style="left:34px;top:687.01px;width:3px"></div>
<div class="ex" style="left:22.2px;top:682.01px"><svg width="12" height="11" viewBox="0 0 12 11" style="position:absolute;left:0;top:0"><defs><linearGradient id="eg" x1="0" y1="0" x2="0" y2="1"><stop offset="0" stop-color="#fbfbfb"/><stop offset="0.45" stop-color="#f2f2f2"/><stop offset="0.55" stop-color="#e2e2e2"/><stop offset="1" stop-color="#d6d6d6"/></linearGradient></defs><rect x="0.5" y="0.5" width="10.5" height="10" rx="1.2" fill="url(#eg)" stroke="#a3a3a3"/><g><path d="M1.5 5.35h8.5" stroke="#3d5689" stroke-width="1.0"/><path d="M5.75 1.7v7.4" stroke="#3d5689" stroke-width="1.0"/></g></svg></div>
<div class="ic" style="left:39px;top:680.01px"><svg width="13" height="15" viewBox="0 0 13 15"><path d="M0.7 0.9H9.6V6.4Q11.8 6.9 11.8 8.6V11Q11.6 12 9.6 12H4.6V13.9L0.7 12z" fill="#f5df96" stroke="#b5a16c" stroke-width="0.9" stroke-linejoin="round"/><path d="M9.6 6.4Q11.8 6.9 11.8 8.6V11Q11.6 12 9.6 12" fill="#fbf0c8" stroke="none"/><path d="M1.1 1.3L6.6 3.4V10L4.6 10.8V13.6L1.1 11.8z" fill="#f9e68e" stroke="#c2a458" stroke-width="0.8" stroke-linejoin="round"/><path d="M7.2 3.8V10.2" stroke="#d9bc6a" stroke-width="0.9"/></svg></div>
<div class="tt" style="left:58.8px;top:678.76px;transform:scaleX(0.9196)">LoopProject</div>
<div class="hl" style="left:34px;top:705.98px;width:3px"></div>
<div class="ex" style="left:22.2px;top:700.98px"><svg width="12" height="11" viewBox="0 0 12 11" style="position:absolute;left:0;top:0"><defs><linearGradient id="eg" x1="0" y1="0" x2="0" y2="1"><stop offset="0" stop-color="#fbfbfb"/><stop offset="0.45" stop-color="#f2f2f2"/><stop offset="0.55" stop-color="#e2e2e2"/><stop offset="1" stop-color="#d6d6d6"/></linearGradient></defs><rect x="0.5" y="0.5" width="10.5" height="10" rx="1.2" fill="url(#eg)" stroke="#a3a3a3"/><g><path d="M1.5 5.35h8.5" stroke="#3d5689" stroke-width="1.0"/><path d="M5.75 1.7v7.4" stroke="#3d5689" stroke-width="1.0"/></g></svg></div>
<div class="ic" style="left:39px;top:698.98px"><svg width="13" height="15" viewBox="0 0 13 15"><path d="M0.7 0.9H9.6V6.4Q11.8 6.9 11.8 8.6V11Q11.6 12 9.6 12H4.6V13.9L0.7 12z" fill="#f5df96" stroke="#b5a16c" stroke-width="0.9" stroke-linejoin="round"/><path d="M9.6 6.4Q11.8 6.9 11.8 8.6V11Q11.6 12 9.6 12" fill="#fbf0c8" stroke="none"/><path d="M1.1 1.3L6.6 3.4V10L4.6 10.8V13.6L1.1 11.8z" fill="#f9e68e" stroke="#c2a458" stroke-width="0.8" stroke-linejoin="round"/><path d="M7.2 3.8V10.2" stroke="#d9bc6a" stroke-width="0.9"/></svg></div>
<div class="tt" style="left:58.8px;top:697.73px;transform:scaleX(0.903)">ProgramingExercises2</div>
<div class="hl" style="left:34px;top:724.95px;width:3px"></div>
<div class="ex" style="left:22.2px;top:719.95px"><svg width="12" height="11" viewBox="0 0 12 11" style="position:absolute;left:0;top:0"><defs><linearGradient id="eg" x1="0" y1="0" x2="0" y2="1"><stop offset="0" stop-color="#fbfbfb"/><stop offset="0.45" stop-color="#f2f2f2"/><stop offset="0.55" stop-color="#e2e2e2"/><stop offset="1" stop-color="#d6d6d6"/></linearGradient></defs><rect x="0.5" y="0.5" width="10.5" height="10" rx="1.2" fill="url(#eg)" stroke="#a3a3a3"/><g><path d="M1.5 5.35h8.5" stroke="#3d5689" stroke-width="1.0"/><path d="M5.75 1.7v7.4" stroke="#3d5689" stroke-width="1.0"/></g></svg></div>
<div class="ic" style="left:39px;top:717.95px"><svg width="13" height="15" viewBox="0 0 13 15"><path d="M0.7 0.9H9.6V6.4Q11.8 6.9 11.8 8.6V11Q11.6 12 9.6 12H4.6V13.9L0.7 12z" fill="#f5df96" stroke="#b5a16c" stroke-width="0.9" stroke-linejoin="round"/><path d="M9.6 6.4Q11.8 6.9 11.8 8.6V11Q11.6 12 9.6 12" fill="#fbf0c8" stroke="none"/><path d="M1.1 1.3L6.6 3.4V10L4.6 10.8V13.6L1.1 11.8z" fill="#f9e68e" stroke="#c2a458" stroke-width="0.8" stroke-linejoin="round"/><path d="M7.2 3.8V10.2" stroke="#d9bc6a" stroke-width="0.9"/></svg></div>
<div class="tt" style="left:58.8px;top:716.7px;transform:scaleX(0.9058)">VariablesProject</div>
</body></html>
